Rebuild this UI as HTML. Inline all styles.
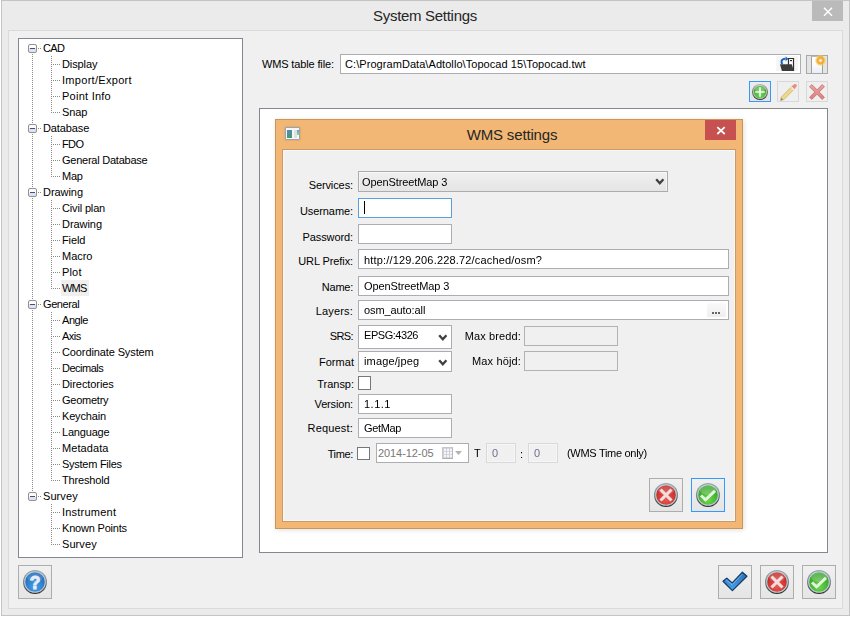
<!DOCTYPE html><html><head><meta charset="utf-8"><style>
*{margin:0;padding:0;box-sizing:border-box}
html,body{width:850px;height:617px;overflow:hidden;background:#fff;font-family:"Liberation Sans",sans-serif;font-size:11px;color:#000}
div,svg{position:absolute}
.t{white-space:nowrap;line-height:14px}
.exp{width:9px;height:9px;border:1px solid #919191;border-radius:2px;background:linear-gradient(#fdfdfd 0,#fdfdfd 50%,#e3e3e3 50%,#e3e3e3 100%)}
.exp:after{content:"";position:absolute;left:1px;top:3px;width:5px;height:1px;background:#3c4d9a}
.vd{width:1px;background:repeating-linear-gradient(#8a8a8a 0 1px,transparent 1px 2px)}
.hd{height:1px;background:repeating-linear-gradient(90deg,#8a8a8a 0 1px,transparent 1px 2px)}
.inp{background:#fff;border:1px solid #abadb3}
.dis{background:#f0f0f0;border:1px solid #d0d0d0}
.r{text-align:right}
.btn{width:34px;height:34px;border:1px solid #adadad;background:linear-gradient(#f0f0f0,#e5e5e5)}
.cmb{border:1px solid #acacac;background:linear-gradient(#f0f0f0,#e5e5e5);box-shadow:inset 0 1px 0 #f8f8f8,inset 1px 0 0 #f4f4f4,inset -1px 0 0 #f4f4f4}
</style></head><body>
<svg width="0" height="0" style="left:0;top:0"><defs><linearGradient id="ring" x1="0" y1="0" x2="0" y2="1"><stop offset="0" stop-color="#9aa8ae"/><stop offset="0.5" stop-color="#7c8a90"/><stop offset="1" stop-color="#2a2a2a"/></linearGradient></defs></svg>
<div style="left:1px;top:0;width:849px;height:616px;background:#ebebeb;border:1px solid #c4c4c4"></div>
<div class="t" style="left:0;top:6px;width:850px;text-align:center;font-size:15px;line-height:20px;letter-spacing:-0.3px;color:#262626">System Settings</div>
<div style="left:812px;top:1px;width:31px;height:20px;background:#bababa"></div>
<svg style="left:812px;top:1px" width="31" height="20"><path d="M12 6.8L20 14.8M20 6.8L12 14.8" stroke="#fff" stroke-width="1.5"/></svg>
<div style="left:8px;top:30px;width:835px;height:579px;background:#f0f0f0;border:1px solid #dadada"></div>
<div style="left:18px;top:38px;width:225px;height:520px;background:#fff;border:1px solid #828790"></div>
<div class="hd" style="left:38px;top:48px;width:3px"></div>
<div class="t" style="left:43px;top:41px;letter-spacing:-0.6px">CAD</div>
<div class="hd" style="left:53px;top:64px;width:7px"></div>
<div class="t" style="left:62px;top:57px;letter-spacing:-0.1px">Display</div>
<div class="hd" style="left:53px;top:80px;width:7px"></div>
<div class="t" style="left:62px;top:73px;letter-spacing:0.3px">Import/Export</div>
<div class="hd" style="left:53px;top:96px;width:7px"></div>
<div class="t" style="left:62px;top:89px;letter-spacing:0.25px">Point Info</div>
<div class="hd" style="left:53px;top:112px;width:7px"></div>
<div class="t" style="left:62px;top:105px;letter-spacing:-0.1px">Snap</div>
<div class="vd" style="left:51px;top:56px;height:57px"></div>
<div class="hd" style="left:38px;top:128px;width:3px"></div>
<div class="t" style="left:43px;top:121px;letter-spacing:-0.114px">Database</div>
<div class="hd" style="left:53px;top:144px;width:7px"></div>
<div class="t" style="left:62px;top:137px;letter-spacing:-0.6px">FDO</div>
<div class="hd" style="left:53px;top:160px;width:7px"></div>
<div class="t" style="left:62px;top:153px;letter-spacing:-0.24px">General Database</div>
<div class="hd" style="left:53px;top:176px;width:7px"></div>
<div class="t" style="left:62px;top:169px;letter-spacing:-0.25px">Map</div>
<div class="vd" style="left:51px;top:136px;height:41px"></div>
<div class="hd" style="left:38px;top:192px;width:3px"></div>
<div class="t" style="left:43px;top:185px;letter-spacing:-0.05px">Drawing</div>
<div class="hd" style="left:53px;top:208px;width:7px"></div>
<div class="t" style="left:62px;top:201px;letter-spacing:-0.156px">Civil plan</div>
<div class="hd" style="left:53px;top:224px;width:7px"></div>
<div class="t" style="left:62px;top:217px;letter-spacing:-0.05px">Drawing</div>
<div class="hd" style="left:53px;top:240px;width:7px"></div>
<div class="t" style="left:62px;top:233px;letter-spacing:-0.1px">Field</div>
<div class="hd" style="left:53px;top:256px;width:7px"></div>
<div class="t" style="left:62px;top:249px;letter-spacing:-0.025px">Macro</div>
<div class="hd" style="left:53px;top:272px;width:7px"></div>
<div class="t" style="left:62px;top:265px;letter-spacing:0.167px">Plot</div>
<div class="hd" style="left:53px;top:288px;width:7px"></div>
<div style="left:61px;top:280px;width:28px;height:16px;background:#efefef"></div>
<div class="t" style="left:62px;top:281px;letter-spacing:-0.8px">WMS</div>
<div class="vd" style="left:51px;top:200px;height:89px"></div>
<div class="hd" style="left:38px;top:304px;width:3px"></div>
<div class="t" style="left:43px;top:297px;letter-spacing:-0.4px">General</div>
<div class="hd" style="left:53px;top:320px;width:7px"></div>
<div class="t" style="left:62px;top:313px;letter-spacing:-0.425px">Angle</div>
<div class="hd" style="left:53px;top:336px;width:7px"></div>
<div class="t" style="left:62px;top:329px;letter-spacing:-0.5px">Axis</div>
<div class="hd" style="left:53px;top:352px;width:7px"></div>
<div class="t" style="left:62px;top:345px;letter-spacing:-0.112px">Coordinate System</div>
<div class="hd" style="left:53px;top:368px;width:7px"></div>
<div class="t" style="left:62px;top:361px;letter-spacing:-0.5px">Decimals</div>
<div class="hd" style="left:53px;top:384px;width:7px"></div>
<div class="t" style="left:62px;top:377px;letter-spacing:-0.07px">Directories</div>
<div class="hd" style="left:53px;top:400px;width:7px"></div>
<div class="t" style="left:62px;top:393px;letter-spacing:-0.243px">Geometry</div>
<div class="hd" style="left:53px;top:416px;width:7px"></div>
<div class="t" style="left:62px;top:409px;letter-spacing:-0.171px">Keychain</div>
<div class="hd" style="left:53px;top:432px;width:7px"></div>
<div class="t" style="left:62px;top:425px;letter-spacing:-0.186px">Language</div>
<div class="hd" style="left:53px;top:448px;width:7px"></div>
<div class="t" style="left:62px;top:441px;letter-spacing:0.086px">Metadata</div>
<div class="hd" style="left:53px;top:464px;width:7px"></div>
<div class="t" style="left:62px;top:457px;letter-spacing:-0.264px">System Files</div>
<div class="hd" style="left:53px;top:480px;width:7px"></div>
<div class="t" style="left:62px;top:473px;letter-spacing:-0.162px">Threshold</div>
<div class="vd" style="left:51px;top:312px;height:169px"></div>
<div class="hd" style="left:38px;top:496px;width:3px"></div>
<div class="t" style="left:43px;top:489px;letter-spacing:0.08px">Survey</div>
<div class="hd" style="left:53px;top:512px;width:7px"></div>
<div class="t" style="left:62px;top:505px;letter-spacing:0.222px">Instrument</div>
<div class="hd" style="left:53px;top:528px;width:7px"></div>
<div class="t" style="left:62px;top:521px;letter-spacing:-0.2px">Known Points</div>
<div class="hd" style="left:53px;top:544px;width:7px"></div>
<div class="t" style="left:62px;top:537px;letter-spacing:0.08px">Survey</div>
<div class="vd" style="left:51px;top:504px;height:41px"></div>
<div class="vd" style="left:32px;top:54px;height:438px"></div>
<div class="exp" style="left:28px;top:44px"></div>
<div class="exp" style="left:28px;top:124px"></div>
<div class="exp" style="left:28px;top:188px"></div>
<div class="exp" style="left:28px;top:300px"></div>
<div class="exp" style="left:28px;top:492px"></div>
<div class="t" style="left:262px;top:57px;letter-spacing:-0.143px;">WMS table file:</div>
<div class="inp" style="left:340px;top:54px;width:461px;height:20px"></div>
<div class="t" style="left:345px;top:57px;letter-spacing:0.064px;">C:\ProgramData\Adtollo\Topocad 15\Topocad.twt</div>
<svg style="left:776px;top:55px" width="22" height="18" viewBox="0 0 22 18">
<rect x="0.3" y="1" width="22" height="15" fill="#f5f5f5"/>
<path d="M12.5 3.5H17.5V15.5H12.5Z" fill="#fff" stroke="#2b2b2b" stroke-width="1.2"/>
<rect x="14" y="5" width="2" height="1.2" fill="#2b2b2b"/>
<path d="M4 9.3H15.8L17.9 15.9H5.9Z" fill="#3b3b3b"/>
<path d="M6.6 9C4.6 7.5 5 3.8 9.6 3.8" stroke="#1767c2" stroke-width="2" fill="none"/><path d="M9.6 1.4L12.4 3.8L9.6 6.2Z" fill="#1767c2"/>
</svg>
<div style="left:806px;top:55px;width:22px;height:19px;border:1px solid #a8a8a8;background:#e4e4e4"></div>
<div style="left:811px;top:56px;width:12px;height:17px;background:linear-gradient(#ffffff 40%,#e6eef8);border-left:1px solid #a0a0a0;border-right:1px solid #a0a0a0;border-top:1px solid #b8b8b8"></div>
<div style="left:815px;top:55px;width:11px;height:11px;border-radius:50%;background:radial-gradient(circle,#fff 0,#fde7b8 12%,#f5ad38 30%,#f2a833 42%,rgba(250,215,90,.55) 62%,rgba(250,230,100,0) 90%)"></div>
<div style="left:749px;top:81px;width:22px;height:21px;border:1px solid #3399ff;background:linear-gradient(#ededed,#e3e3e3)"></div>
<svg style="left:750px;top:82px" width="20" height="20" viewBox="0 0 20 20">
<defs><radialGradient id="gp" cx="50%" cy="70%" r="65%"><stop offset="0" stop-color="#6fd658"/><stop offset="1" stop-color="#3ea92f"/></radialGradient>
<linearGradient id="gr" x1="0" y1="0" x2="0" y2="1"><stop offset="0" stop-color="#b8b8b8"/><stop offset="1" stop-color="#2e2e2e"/></linearGradient></defs>
<circle cx="10" cy="10" r="8" fill="url(#gr)"/>
<circle cx="10" cy="10" r="7" fill="#c9d6cc"/>
<circle cx="10" cy="10" r="6.3" fill="url(#gp)"/>
<ellipse cx="10" cy="6.8" rx="5" ry="3.2" fill="#fff" opacity="0.25"/>
<path d="M5.2 10H14.8M10 5.2V14.8" stroke="#f2faf0" stroke-width="1.7"/>
</svg>
<div style="left:777px;top:81px;width:22px;height:21px;border:1px solid #d8d8d8;background:#efefef"></div>
<svg style="left:777px;top:81px" width="22" height="21" viewBox="0 0 22 21">
<path d="M4.2 16.2L15.5 4.8L18 7.3L6.7 18.7L3.5 19.5Z" fill="#ecd98c" stroke="#c9b36a" stroke-width="0.8"/>
<path d="M14.5 5.8L16.8 3.5Q18.3 2.4 19.4 3.6Q20.5 4.8 19.2 6L17 8.3Z" fill="#e98a7a"/>
<path d="M14.3 6L17 8.7" stroke="#f4f4f4" stroke-width="1.4"/>
<path d="M3.5 19.5L4.4 16.8L6.2 18.6Z" fill="#8a8a8a"/>
</svg>
<div style="left:806px;top:81px;width:22px;height:21px;border:1px solid #d8d8d8;background:#efefef"></div>
<svg style="left:806px;top:81px" width="22" height="21" viewBox="0 0 22 21">
<defs><linearGradient id="rx" x1="0" y1="0" x2="0" y2="1"><stop offset="0" stop-color="#e7a5a5"/><stop offset="1" stop-color="#e07d7d"/></linearGradient></defs>
<path d="M3.6 5.8L5.8 3.6L11 8.8L16.2 3.6L18.4 5.8L13.2 11L18.4 16.2L16.2 18.4L11 13.2L5.8 18.4L3.6 16.2L8.8 11Z" fill="url(#rx)" stroke="#c47474" stroke-width="0.9"/>
</svg>
<div style="left:259px;top:108px;width:569px;height:445px;background:#fff;border:1px solid #828790"></div>
<div style="left:275px;top:119px;width:468px;height:410px;box-shadow:1px 1px 5px rgba(0,0,0,0.13)"></div>
<div style="left:275px;top:119px;width:468px;height:410px;background:#f2b774;border:1px solid #c8955a"></div>
<div style="left:282px;top:149px;width:454px;height:373px;background:#f0f0f0;border:1px solid #cf9a5f;box-shadow:inset 0 0 0 1px #f6f9fc"></div>
<div class="t" style="left:278px;top:125px;width:468px;text-align:center;font-size:15px;line-height:20px;letter-spacing:-0.15px;color:#262626">WMS settings</div>
<div style="left:705px;top:120px;width:31px;height:20px;background:#c75050"></div>
<svg style="left:705px;top:120px" width="31" height="20"><path d="M12.3 7.2L19.7 14M19.7 7.2L12.3 14" stroke="#fff" stroke-width="1.7"/></svg>
<div style="left:285px;top:127px;width:15px;height:13px;border:1px solid #98a4b0;border-radius:1px;background:#f7f7f7;box-shadow:0 0 2px rgba(120,80,30,.35)"></div>
<div style="left:287px;top:130px;width:5px;height:8px;background:linear-gradient(160deg,#5d86c2,#3f9f5c)"></div>
<div style="left:294px;top:130px;width:3px;height:8px;background:#e0e0e0"></div>
<div style="left:297px;top:130px;width:2px;height:5px;background:linear-gradient(#6f9cd2,#93d395)"></div>
<div class="t r" style="left:203px;top:178px;width:150px;letter-spacing:-0.1px;">Services:</div>
<div class="t r" style="left:203px;top:204px;width:150px;letter-spacing:-0.075px;">Username:</div>
<div class="t r" style="left:203px;top:230px;width:150px;letter-spacing:-0.1px;">Password:</div>
<div class="t r" style="left:203px;top:254px;width:150px;letter-spacing:-0.1px;">URL Prefix:</div>
<div class="t r" style="left:203px;top:280px;width:150px;letter-spacing:-0.25px;">Name:</div>
<div class="t r" style="left:203px;top:304px;width:150px;letter-spacing:0.18px;">Layers:</div>
<div class="t r" style="left:203px;top:329px;width:150px;letter-spacing:-0.6px;">SRS:</div>
<div class="t r" style="left:204px;top:355px;width:150px;letter-spacing:0.04px;">Format</div>
<div class="t r" style="left:204px;top:377px;width:150px;letter-spacing:-0.03px;">Transp:</div>
<div class="t r" style="left:203px;top:397px;width:150px;letter-spacing:-0.17px;">Version:</div>
<div class="t r" style="left:203px;top:421px;width:150px;letter-spacing:0.17px;">Request:</div>
<div class="t r" style="left:203px;top:447px;width:150px;letter-spacing:-0.35px;">Time:</div>
<div class="t r" style="left:371px;top:329px;width:150px;letter-spacing:0.12px;will-change:transform">Max bredd:</div>
<div class="t r" style="left:371px;top:354px;width:150px;letter-spacing:0.14px;will-change:transform">Max höjd:</div>
<div class="cmb" style="left:358px;top:171px;width:310px;height:21px"></div>
<div class="t" style="left:362px;top:175px;letter-spacing:-0.1px;will-change:transform">OpenStreetMap 3</div>
<svg style="left:655px;top:178px" width="10" height="8"><path d="M1.2 1.3L4.8 5.3L8.4 1.3" stroke="#404040" stroke-width="2.3" fill="none"/></svg>
<div class="inp" style="left:358px;top:198px;width:94px;height:20px;border-color:#5a9fe0"></div>
<div style="left:364px;top:201px;width:1px;height:13px;background:#000"></div>
<div class="inp" style="left:358px;top:224px;width:94px;height:20px"></div>
<div class="inp" style="left:358px;top:249px;width:371px;height:20px"></div>
<div class="t" style="left:364px;top:253px;letter-spacing:0.17px;will-change:transform">http://129.206.228.72/cached/osm?</div>
<div class="inp" style="left:358px;top:276px;width:371px;height:20px"></div>
<div class="t" style="left:364px;top:279px;letter-spacing:-0.1px;will-change:transform">OpenStreetMap 3</div>
<div class="inp" style="left:358px;top:300px;width:371px;height:20px"></div>
<div class="t" style="left:364px;top:303px;letter-spacing:-0.09px;will-change:transform">osm_auto:all</div>
<div style="left:707px;top:303px;width:19px;height:14px;background:linear-gradient(#f9f9f9,#efefef)"></div>
<div style="left:712px;top:312px;width:2px;height:2px;background:#666"></div><div style="left:715px;top:312px;width:2px;height:2px;background:#666"></div><div style="left:718px;top:312px;width:2px;height:2px;background:#666"></div>
<div class="inp" style="left:358px;top:325px;width:94px;height:24px"></div>
<div class="t" style="left:364px;top:328px;letter-spacing:-0.46px;will-change:transform">EPSG:4326</div>
<svg style="left:438px;top:334px" width="10" height="8"><path d="M1.2 1.3L4.8 5.3L8.4 1.3" stroke="#404040" stroke-width="2.3" fill="none"/></svg>
<div class="inp" style="left:358px;top:351px;width:94px;height:21px"></div>
<div class="t" style="left:364px;top:354px;letter-spacing:0.14px;will-change:transform">image/jpeg</div>
<svg style="left:438px;top:359px" width="10" height="8"><path d="M1.2 1.3L4.8 5.3L8.4 1.3" stroke="#404040" stroke-width="2.3" fill="none"/></svg>
<div class="dis" style="left:524px;top:326px;width:94px;height:20px;border-color:#b2b2b2"></div>
<div class="dis" style="left:524px;top:351px;width:94px;height:20px;border-color:#b2b2b2"></div>
<div class="inp" style="left:358px;top:376px;width:13px;height:14px;border-color:#777"></div>
<div class="inp" style="left:358px;top:394px;width:94px;height:20px"></div>
<div class="t" style="left:364px;top:397px;letter-spacing:0.5px;will-change:transform">1.1.1</div>
<div class="inp" style="left:358px;top:418px;width:94px;height:20px"></div>
<div class="t" style="left:364px;top:421px;letter-spacing:-0.34px;will-change:transform">GetMap</div>
<div class="inp" style="left:357px;top:447px;width:13px;height:13px;border-color:#777"></div>
<div class="inp" style="left:376px;top:443px;width:93px;height:20px;border-color:#abadb3"></div>
<div class="t" style="left:378px;top:446px;letter-spacing:-0.08px;color:#777">2014-12-05</div>
<div style="left:442px;top:447px;width:11px;height:12px;border:1px solid #c8c8c8;border-right-color:#b8b8b8;border-bottom-color:#b0b0b0;background:repeating-linear-gradient(90deg,rgba(200,200,210,.8) 0 1px,transparent 1px 3px),repeating-linear-gradient(#d8d8e0 0 1px,#f6f6f8 1px 3px)"></div>
<svg style="left:455px;top:451px" width="7" height="4"><path d="M0 0H7L3.5 4Z" fill="#b4b4b4"/></svg>
<div class="t" style="left:474px;top:446px;letter-spacing:0px;">T</div>
<div class="dis" style="left:486px;top:443px;width:30px;height:20px;border-color:#d9d9d9;box-shadow:inset 0 0 0 1px #f6f6f6"></div>
<div class="t" style="left:492px;top:446px;letter-spacing:0px;color:#6e6e8e">0</div>
<div class="t" style="left:520px;top:447px;letter-spacing:0px;">:</div>
<div class="dis" style="left:528px;top:443px;width:30px;height:20px;border-color:#d9d9d9;box-shadow:inset 0 0 0 1px #f6f6f6"></div>
<div class="t" style="left:534px;top:446px;letter-spacing:0px;color:#6e6e8e">0</div>
<div class="t" style="left:567px;top:446px;letter-spacing:-0.3px;">(WMS Time only)</div>
<div class="btn" style="left:649px;top:478px"></div>
<svg style="left:649px;top:478px" width="34" height="34" viewBox="0 0 34 34">
<defs><radialGradient id="rg649" cx="50%" cy="70%" r="60%"><stop offset="0" stop-color="#ea5a50"/><stop offset="1" stop-color="#c42a2a"/></radialGradient></defs>
<circle cx="17" cy="17" r="12" fill="url(#ring)"/>
<circle cx="17" cy="17" r="10.8" fill="#b9d0d6"/>
<circle cx="17" cy="17" r="9.8" fill="url(#rg649)"/>
<ellipse cx="17" cy="12" rx="8" ry="5" fill="#ffffff" opacity="0.18"/>
<path d="M11.5 11.5L22.5 22.5M22.5 11.5L11.5 22.5" stroke="#f3dede" stroke-width="3.1"/>
</svg>
<div class="btn" style="left:691px;top:478px;border-color:#3399ff"></div>
<svg style="left:691px;top:478px" width="34" height="34" viewBox="0 0 34 34">
<defs><radialGradient id="gg691" cx="50%" cy="75%" r="60%"><stop offset="0" stop-color="#6ad84a"/><stop offset="1" stop-color="#3aa52c"/></radialGradient></defs>
<circle cx="17" cy="17" r="12" fill="url(#ring)"/>
<circle cx="17" cy="17" r="10.8" fill="#bcd0d8"/>
<circle cx="17" cy="17" r="9.8" fill="url(#gg691)"/>
<ellipse cx="17" cy="12" rx="8" ry="5" fill="#ffffff" opacity="0.22"/>
<path d="M10 17.5L14.5 21.8L24 12.8" stroke="#e4f4dc" stroke-width="3" fill="none"/>
</svg>
<div class="btn" style="left:18px;top:565px"></div>
<svg style="left:18px;top:565px" width="34" height="34" viewBox="0 0 34 34">
<defs><radialGradient id="hb" cx="50%" cy="75%" r="65%"><stop offset="0" stop-color="#4aa0e8"/><stop offset="1" stop-color="#1f6cbf"/></radialGradient></defs>
<circle cx="17" cy="17" r="12" fill="url(#ring)"/>
<circle cx="17" cy="17" r="10.8" fill="#c0ccd4"/>
<circle cx="17" cy="17" r="9.8" fill="url(#hb)"/>
<ellipse cx="17" cy="12" rx="8" ry="5" fill="#ffffff" opacity="0.15"/>
<text x="17" y="23.8" text-anchor="middle" font-family="Liberation Sans" font-weight="bold" font-size="17.5" fill="#e6eef8" stroke="#e6eef8" stroke-width="0.9">?</text>
</svg>
<div class="btn" style="left:718px;top:565px"></div>
<svg style="left:718px;top:565px" width="34" height="34" viewBox="0 0 34 34">
<defs><linearGradient id="bc" x1="0" y1="0" x2="0" y2="1"><stop offset="0" stop-color="#2e6db0"/><stop offset="1" stop-color="#4aa3ef"/></linearGradient></defs>
<path d="M5 16.3L8.8 13.1L14.2 17.9L24.4 7.2L28.9 11.3L14.4 25.6Z" fill="url(#bc)" stroke="#0e3a66" stroke-width="1.2" stroke-linejoin="round"/>
<path d="M8 14.8L14.1 19.7L24.4 9.2" stroke="#9cc4e8" stroke-width="1" fill="none" opacity="0.7"/>
</svg>
<div class="btn" style="left:760px;top:565px"></div>
<svg style="left:760px;top:565px" width="34" height="34" viewBox="0 0 34 34">
<defs><radialGradient id="rg760" cx="50%" cy="70%" r="60%"><stop offset="0" stop-color="#ea5a50"/><stop offset="1" stop-color="#c42a2a"/></radialGradient></defs>
<circle cx="17" cy="17" r="12" fill="url(#ring)"/>
<circle cx="17" cy="17" r="10.8" fill="#b9d0d6"/>
<circle cx="17" cy="17" r="9.8" fill="url(#rg760)"/>
<ellipse cx="17" cy="12" rx="8" ry="5" fill="#ffffff" opacity="0.18"/>
<path d="M11.5 11.5L22.5 22.5M22.5 11.5L11.5 22.5" stroke="#f3dede" stroke-width="3.1"/>
</svg>
<div class="btn" style="left:802px;top:565px"></div>
<svg style="left:802px;top:565px" width="34" height="34" viewBox="0 0 34 34">
<defs><radialGradient id="gg802" cx="50%" cy="75%" r="60%"><stop offset="0" stop-color="#6ad84a"/><stop offset="1" stop-color="#3aa52c"/></radialGradient></defs>
<circle cx="17" cy="17" r="12" fill="url(#ring)"/>
<circle cx="17" cy="17" r="10.8" fill="#bcd0d8"/>
<circle cx="17" cy="17" r="9.8" fill="url(#gg802)"/>
<ellipse cx="17" cy="12" rx="8" ry="5" fill="#ffffff" opacity="0.22"/>
<path d="M10 17.5L14.5 21.8L24 12.8" stroke="#e4f4dc" stroke-width="3" fill="none"/>
</svg>
</body></html>
